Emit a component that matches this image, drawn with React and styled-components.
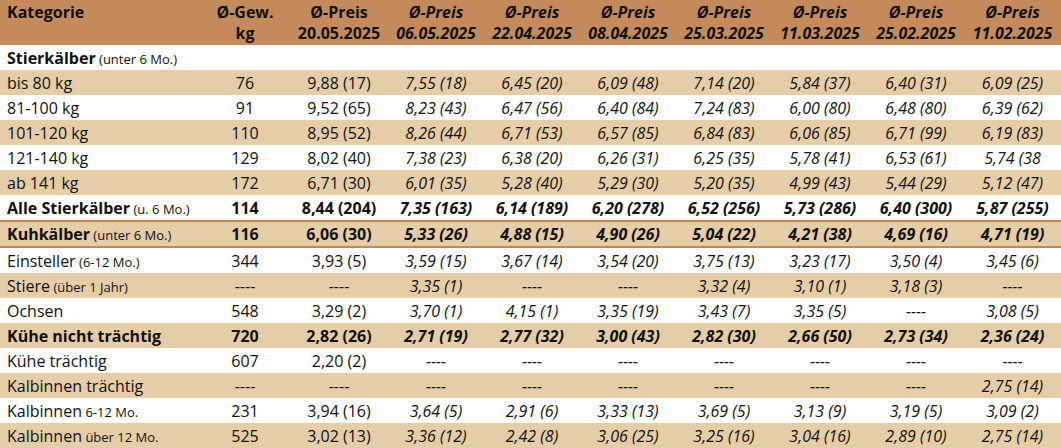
import React from "react";
import styled, { createGlobalStyle, css } from "styled-components";

const Global = createGlobalStyle`
  html, body { margin: 0; padding: 0; background: #fff; }
  body { font-family: "Open Sans", "Noto Sans", sans-serif; color: #111; }
`;

const COLS = "200px 90px 98px repeat(6, 96px) 1fr";

const Table = styled.div`
  width: 1061px;
  display: flex;
  flex-direction: column;
  font-size: 16px;
`;

const HeaderRow = styled.div`
  display: grid;
  grid-template-columns: ${COLS};
  height: 45px;
  background: #c48a5b;
  font-weight: 700;
  line-height: 21px;
`;

const HeadCell = styled.div`
  padding-top: 2px;
  text-align: ${(p) => (p.$left ? "left" : "center")};
  padding-left: ${(p) => (p.$left ? "7px" : "0")};
  font-style: ${(p) => (p.$italic ? "italic" : "normal")};
  white-space: nowrap;
`;

const Row = styled.div`
  display: grid;
  grid-template-columns: ${COLS};
  height: 25px;
  align-items: center;
  background: ${(p) => (p.$band ? "#e5cda8" : "#fff")};
  font-weight: ${(p) => (p.$bold ? 700 : 400)};
  ${(p) =>
    p.$framed &&
    css`
      height: 28px;
      border-top: 2px solid #c08a58;
      border-bottom: 2px solid #c08a58;
      box-sizing: border-box;
    `}
`;

const Label = styled.div`
  padding-left: 7px;
  white-space: nowrap;
  font-weight: ${(p) => (p.$bold ? 700 : "inherit")};
`;

const Note = styled.span`
  font-size: 13px;
  font-weight: 400;
`;

const Value = styled.div`
  text-align: center;
  white-space: nowrap;
  overflow: hidden;
  font-style: ${(p) => (p.$italic ? "italic" : "normal")};
`;

const dates = ["20.05.2025", "06.05.2025", "22.04.2025", "08.04.2025", "25.03.2025", "11.03.2025", "25.02.2025", "11.02.2025"];

const D = "----";
const rows = [
  { label: "Stierkälber", note: "(unter 6 Mo.)", labelBold: true, values: null },
  { label: "bis 80 kg", values: ["76", "9,88 (17)", "7,55 (18)", "6,45 (20)", "6,09 (48)", "7,14 (20)", "5,84 (37)", "6,40 (31)", "6,09 (25)"] },
  { label: "81-100 kg", values: ["91", "9,52 (65)", "8,23 (43)", "6,47 (56)", "6,40 (84)", "7,24 (83)", "6,00 (80)", "6,48 (80)", "6,39 (62)"] },
  { label: "101-120 kg", values: ["110", "8,95 (52)", "8,26 (44)", "6,71 (53)", "6,57 (85)", "6,84 (83)", "6,06 (85)", "6,71 (99)", "6,19 (83)"] },
  { label: "121-140 kg", values: ["129", "8,02 (40)", "7,38 (23)", "6,38 (20)", "6,26 (31)", "6,25 (35)", "5,78 (41)", "6,53 (61)", "5,74 (38"] },
  { label: "ab 141 kg", values: ["172", "6,71 (30)", "6,01 (35)", "5,28 (40)", "5,29 (30)", "5,20 (35)", "4,99 (43)", "5,44 (29)", "5,12 (47)"] },
  { label: "Alle Stierkälber", note: "(u. 6 Mo.)", bold: true, values: ["114", "8,44 (204)", "7,35 (163)", "6,14 (189)", "6,20 (278)", "6,52 (256)", "5,73 (286)", "6,40 (300)", "5,87 (255)"] },
  { label: "Kuhkälber", note: "(unter 6 Mo.)", bold: true, framed: true, values: ["116", "6,06 (30)", "5,33 (26)", "4,88 (15)", "4,90 (26)", "5,04 (22)", "4,21 (38)", "4,69 (16)", "4,71 (19)"] },
  { label: "Einsteller", note: "(6-12 Mo.)", values: ["344", "3,93 (5)", "3,59 (15)", "3,67 (14)", "3,54 (20)", "3,75 (13)", "3,23 (17)", "3,50 (4)", "3,45 (6)"] },
  { label: "Stiere", note: "(über 1 Jahr)", values: [D, D, "3,35 (1)", D, D, "3,32 (4)", "3,10 (1)", "3,18 (3)", D] },
  { label: "Ochsen", values: ["548", "3,29 (2)", "3,70 (1)", "4,15 (1)", "3,35 (19)", "3,43 (7)", "3,35 (5)", D, "3,08 (5)"] },
  { label: "Kühe nicht trächtig", bold: true, values: ["720", "2,82 (26)", "2,71 (19)", "2,77 (32)", "3,00 (43)", "2,82 (30)", "2,66 (50)", "2,73 (34)", "2,36 (24)"] },
  { label: "Kühe trächtig", values: ["607", "2,20 (2)", D, D, D, D, D, D, D] },
  { label: "Kalbinnen trächtig", values: [D, D, D, D, D, D, D, D, "2,75 (14)"] },
  { label: "Kalbinnen", note: "6-12 Mo.", values: ["231", "3,94 (16)", "3,64 (5)", "2,91 (6)", "3,33 (13)", "3,69 (5)", "3,13 (9)", "3,19 (5)", "3,09 (2)"] },
  { label: "Kalbinnen", note: "über 12 Mo.", values: ["525", "3,02 (13)", "3,36 (12)", "2,42 (8)", "3,06 (25)", "3,25 (16)", "3,04 (16)", "2,89 (10)", "2,75 (14)"] },
];

export default function App() {
  return (
    <>
      <Global />
      <Table>
        <HeaderRow>
          <HeadCell $left>Kategorie</HeadCell>
          <HeadCell>
            Ø-Gew.
            <br />
            kg
          </HeadCell>
          {dates.map((d, i) => (
            <HeadCell key={d} $italic={i > 0}>
              Ø-Preis
              <br />
              {d}
            </HeadCell>
          ))}
        </HeaderRow>
        {rows.map((r, i) => (
          <Row key={i} $band={i % 2 === 1} $bold={r.bold} $framed={r.framed}>
            <Label $bold={r.labelBold}>
              {r.label}
              {r.note && <Note> {r.note}</Note>}
            </Label>
            {r.values &&
              r.values.map((v, j) => (
                <Value key={j} $italic={j > 1}>
                  {v}
                </Value>
              ))}
          </Row>
        ))}
      </Table>
    </>
  );
}
